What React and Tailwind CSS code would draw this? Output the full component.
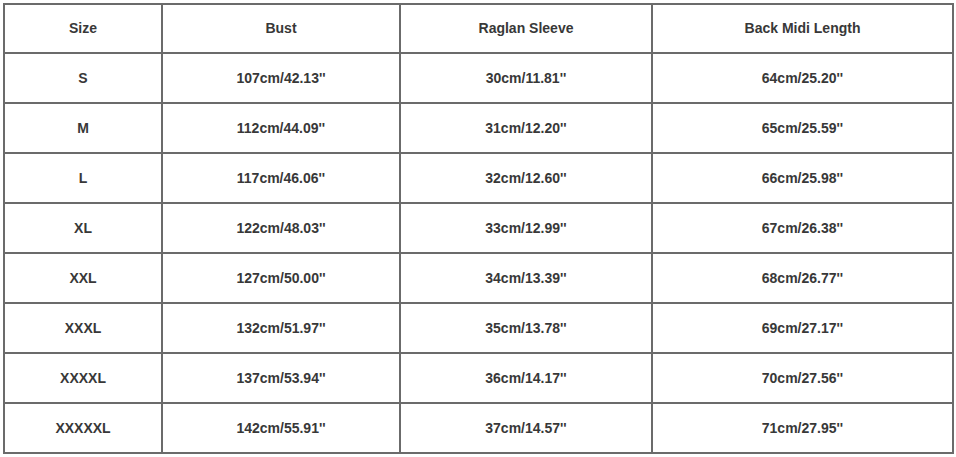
import React from "react";

const rows = [
  ["S", "107cm/42.13''", "30cm/11.81''", "64cm/25.20''"],
  ["M", "112cm/44.09''", "31cm/12.20''", "65cm/25.59''"],
  ["L", "117cm/46.06''", "32cm/12.60''", "66cm/25.98''"],
  ["XL", "122cm/48.03''", "33cm/12.99''", "67cm/26.38''"],
  ["XXL", "127cm/50.00''", "34cm/13.39''", "68cm/26.77''"],
  ["XXXL", "132cm/51.97''", "35cm/13.78''", "69cm/27.17''"],
  ["XXXXL", "137cm/53.94''", "36cm/14.17''", "70cm/27.56''"],
  ["XXXXXL", "142cm/55.91''", "37cm/14.57''", "71cm/27.95''"],
];

const headers = ["Size", "Bust", "Raglan Sleeve", "Back Midi Length"];

const App = () => {
  return (
    <div className="min-h-screen w-full bg-white pl-[3px] pt-[3px] font-['Liberation_Sans',Arial,sans-serif]">
      <table className="w-[949px] table-fixed border-collapse text-center text-[14px] font-bold text-[#383838]">
        <colgroup>
          <col className="w-[158px]" />
          <col className="w-[238px]" />
          <col className="w-[252px]" />
          <col className="w-[301px]" />
        </colgroup>
        <thead>
          <tr className="h-[49px]">
            {headers.map((h) => (
              <th key={h} className="border-2 border-[#6b6b6b] font-bold">
                {h}
              </th>
            ))}
          </tr>
        </thead>
        <tbody>
          {rows.map((r) => (
            <tr key={r[0]} className="h-[50px]">
              {r.map((c, i) => (
                <td key={i} className="border-2 border-[#6b6b6b]">
                  {c}
                </td>
              ))}
            </tr>
          ))}
        </tbody>
      </table>
    </div>
  );
};

export default App;
